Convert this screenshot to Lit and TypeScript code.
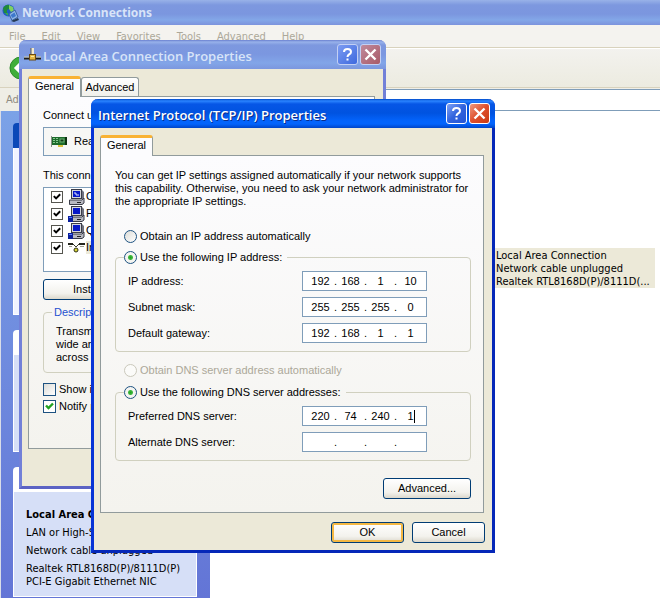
import { LitElement, html, svg, css, nothing } from "lit";
import { customElement, property } from "lit/decorators.js";

const tahoma = css`"DejaVu Sans Condensed", "Noto Sans", sans-serif`;
const dialogFont = css`"Liberation Sans", Arial, sans-serif`;
const titleFont = css`"Open Sans", "Noto Sans", sans-serif`;

const globeIcon = html`<svg width="17" height="18" viewBox="0 0 17 18" aria-hidden="true">
  <circle cx="6.5" cy="6.5" r="6" fill="#1f5cc4" />
  <path d="M1 4 Q4 0 7 1 L8 4 L5 6 L5 9 L2 9Z" fill="#1f8a3c" />
  <path d="M7 1 L11 3 L12 7 L9 8 L7 5Z" fill="#7fd060" />
  <path d="M3 9 L6 9 L6 12Z" fill="#38a850" />
  <path d="M7 10 L13 6 L16 13 L10 16.5Z" fill="#8fb4e4" stroke="#3a64a4" />
  <path d="M8.5 11 L12.5 8.5 L14 12 L10.5 14Z" fill="#3d78cc" />
  <path d="M9 17 L16 14 L17 16 L12 18Z" fill="#243a55" />
</svg>`;

const plugIcon = html`<svg width="17" height="14" viewBox="0 0 17 14" aria-hidden="true">
  <path d="M7 0 H10 V6 H7Z" fill="#f3ead0" />
  <path d="M7 0 V6" stroke="#5b5b52" />
  <path d="M0 10.5 H5 M12 10.5 H17" stroke="#1e1e1a" stroke-width="2" />
  <path d="M0 9 H5 M12 9 H17" stroke="#cfc9a8" />
  <rect x="5.5" y="6.5" width="6" height="5.5" fill="#e5b843" stroke="#6b4a14" />
  <path d="M7 8.5 H10" stroke="#fbe9a0" />
</svg>`;

const cardIcon = html`<svg width="18" height="14" viewBox="0 0 18 14" aria-hidden="true">
  <path d="M1.5 1 V12" stroke="#8a8f86" />
  <rect x="2" y="2" width="14" height="8" fill="#1d6b2b" />
  <path d="M3 3.5 H8 M3 5.5 H8 M3 7.5 H8" stroke="#86c88c" />
  <path d="M5.5 3 V8" stroke="#1d6b2b" />
  <rect x="10" y="4" width="4" height="3" fill="#103c18" stroke="#6fb576" />
  <path d="M16 2 V10" stroke="#0b3311" stroke-width="2" />
  <rect x="8" y="10" width="5" height="2" fill="#d9c13b" />
</svg>`;

const computer = (shared: boolean) => html`<svg width="17" height="16" viewBox="0 0 17 16" aria-hidden="true">
  <path d="M4 1 H14 L16 3 V10 H4Z" fill="#6f7280" />
  <rect x="3.5" y="0.5" width="10" height="9" fill="#d5d6dc" stroke="#3a3c48" />
  <rect x="5" y="2" width="7" height="6" fill="#0718c8" />
  ${shared ? nothing : svg`<path d="M6 4 H8 V6 H11" stroke="#dfe5ff" fill="none" />`}
  <path d="M1.5 11 H14 L16 9 V14 L14 15.5 H1.5Z" fill="#b9bac2" stroke="#3a3c48" />
  <path d="M9 13.5 H13" stroke="#222" />
  ${shared ? svg`<path d="M0 10 H5 V16 H0Z" fill="#0a1f9c" /><path d="M1 11.5 H4" stroke="#5a7bff" />` : nothing}
</svg>`;

const cableIcon = html`<svg width="17" height="12" viewBox="0 0 17 12" aria-hidden="true">
  <path d="M0 2 H5 M11 2 H17" stroke="#24251d" stroke-width="2" />
  <path d="M1 4.5 H4 M12 4.5 H16" stroke="#9b9c8c" />
  <path d="M5 2 L8 5 L11 2" stroke="#3a3b2c" fill="none" />
  <circle cx="8" cy="8" r="2" fill="#d6d437" stroke="#2d2e14" />
</svg>`;

@customElement("xp-window")
class XpWindow extends LitElement {
  @property() heading = "";
  @property({ type: Boolean, reflect: true }) inactive = false;

  static styles = css`
    :host {
      display: block;
      box-sizing: border-box;
      border: 3px solid #0734d6;
      border-top: 0;
      border-right-color: #0527b8;
      border-bottom-color: #0527b8;
      border-radius: 7px 7px 0 0;
      background: #ece9d8;
    }
    :host([inactive]) {
      border-color: #7280d8;
      border-bottom-color: #5c63c4;
    }
    .bar {
      display: flex;
      align-items: center;
      gap: 2px;
      height: 29px;
      margin: 0 -3px;
      padding: 0 5px 0 7px;
      box-sizing: border-box;
      border-radius: 7px 7px 0 0;
      background: linear-gradient(#0049c8 0, #2a84ff 2px, #0656e6 5px, #0053e0 14px, #0364fc 22px, #0364fc 25px, #0045c8 29px);
    }
    :host([inactive]) .bar {
      background: linear-gradient(#6a80d0 0, #98b2ea 2px, #7d98df 5px, #7b97e0 14px, #82a5e8 23px, #7c97df 29px);
      padding-left: 5px;
    }
    h2 {
      flex: 1;
      margin: 0;
      padding-top: 2px;
      font: 600 13px/20px ${titleFont};
      color: #fff;
      text-shadow: 1px 1px 0 #0a2d8c;
      white-space: nowrap;
    }
    :host([inactive]) h2 {
      color: #d8e4f8;
      text-shadow: none;
    }
    button {
      width: 21px;
      height: 21px;
      padding: 0;
      border: 1px solid #fff;
      border-radius: 3px;
      background: linear-gradient(135deg, #7fa3f5, #3263dd 50%, #2456d6);
    }
    button.close {
      background: linear-gradient(135deg, #f09a80, #de4f2c 50%, #c83a14);
    }
    :host([inactive]) button {
      border-color: #c3d0f4;
      background: linear-gradient(135deg, #7c9cf2, #3e69de);
    }
    :host([inactive]) button.close {
      background: linear-gradient(135deg, #c08a9c, #a85a68);
    }
    svg {
      display: block;
    }
    .body {
      padding: 7px 7px 7px 6px;
    }
  `;

  render() {
    return html`
      <div class="bar">
        <slot name="icon"></slot>
        <h2>${this.heading}</h2>
        <button aria-label="Help">
          <svg width="19" height="19" viewBox="0 0 19 19">
            <path d="M6 7 Q6 4 9.5 4 Q13 4 13 7 Q13 8.5 11 9.5 Q9.5 10.3 9.5 12" stroke="#fff" stroke-width="2" fill="none" />
            <rect x="8.5" y="13.5" width="2" height="2" fill="#fff" />
          </svg>
        </button>
        <button class="close" aria-label="Close">
          <svg width="19" height="19" viewBox="0 0 19 19">
            <path d="M4.5 4.5 L14.5 14.5 M14.5 4.5 L4.5 14.5" stroke="#fff" stroke-width="2.4" />
          </svg>
        </button>
      </div>
      <div class="body"><slot></slot></div>
    `;
  }
}

@customElement("ip-field")
class IpField extends LitElement {
  @property() label = "";
  @property({ type: Array }) octets: string[] = ["", "", "", ""];
  @property({ type: Boolean }) editing = false;

  static styles = css`
    :host {
      display: flex;
      align-items: center;
      justify-content: space-between;
    }
    .box {
      display: flex;
      align-items: center;
      box-sizing: border-box;
      width: 125px;
      height: 20px;
      padding-left: 4px;
      border: 1px solid #7f9db9;
      background: #fff;
    }
    .octet {
      position: relative;
      width: 27px;
      flex: none;
    }
    .dot {
      width: 3px;
      flex: none;
      text-align: center;
    }
    input {
      display: block;
      width: 100%;
      height: 16px;
      box-sizing: border-box;
      padding: 0;
      border: 0;
      outline: 0;
      background: none;
      color: #000;
      font: inherit;
      text-align: center;
    }
    .caret {
      position: absolute;
      left: 17px;
      top: 2px;
      width: 1px;
      height: 13px;
      background: #000;
    }
  `;

  render() {
    return html`
      <label for="o0">${this.label}</label>
      <div class="box">
        ${this.octets.map(
          (value, i) => html`${i ? html`<span class="dot">.</span>` : nothing}
            <span class="octet">
              <input id="o${i}" aria-label="${this.label} part ${i + 1}" .value=${value} />
              ${this.editing && i === 3 ? html`<span class="caret"></span>` : nothing}
            </span>`
        )}
      </div>
    `;
  }
}

@customElement("app-root")
class AppRoot extends LitElement {
  static styles = css`
    :host {
      display: flex;
      flex-direction: column;
      position: relative;
      box-sizing: border-box;
      height: 100vh;
      overflow: hidden;
      background: #fff;
      color: #000;
      font: 11px/13px ${tahoma};
    }
    p,
    h1,
    h3 {
      margin: 0;
    }
    svg {
      display: block;
      flex: none;
    }
    .titlebar {
      display: flex;
      align-items: center;
      gap: 3px;
      height: 25px;
      flex: none;
      padding-left: 2px;
      background: linear-gradient(#98b2e8 0, #7d98df 5px, #7b96df 14px, #83a7e8 20px, #7c93dd 25px);
    }
    h1 {
      font: 700 12px/20px "Noto Sans", sans-serif;
      color: #d8e4f8;
    }
    .menu {
      display: flex;
      gap: 16px;
      height: 23px;
      flex: none;
      padding: 4px 9px 0;
      box-sizing: border-box;
      background: #f4f3ef;
      border-bottom: 1px solid #d8d2bd;
      color: #aca899;
      line-height: 15px;
    }
    .toolbar {
      display: flex;
      align-items: center;
      height: 40px;
      flex: none;
      padding-left: 9px;
      box-sizing: border-box;
      background: linear-gradient(#f3f2ee, #ecebe0);
      border-top: 1px solid #fff;
      border-bottom: 1px solid #d8d2bd;
    }
    .back {
      width: 24px;
      height: 24px;
      padding: 0;
      border: 0;
      background: none;
    }
    .address {
      display: flex;
      align-items: center;
      height: 23px;
      flex: none;
      padding-left: 6px;
      background: #efeee6;
      color: #8f8c80;
    }
    .address input {
      flex: 1;
      min-width: 0;
      height: 22px;
      margin-left: 8px;
      box-sizing: border-box;
      border: 1px solid #7f9db9;
      border-right: 0;
      background: #fff;
    }
    .main {
      display: flex;
      flex: 1;
      min-height: 0;
    }
    .side {
      display: flex;
      flex-direction: column;
      gap: 15px;
      width: 210px;
      flex: none;
      box-sizing: border-box;
      padding: 12px 13px 0 12px;
      border-left: 1px solid #d9dde8;
      background: linear-gradient(#7ba2e7, #6375d6);
    }
    .side h3 {
      height: 25px;
      border-radius: 4px 4px 0 0;
      background: #fff;
    }
    .side .primary {
      background: #0a48b8;
    }
    .card div {
      box-sizing: border-box;
      border: 1px solid #fff;
      border-top: 0;
      background: #d6dff7;
    }
    .tasks div {
      height: 167px;
      background: #f0f3ff;
    }
    .places div {
      height: 97px;
    }
    .card .details {
      display: flex;
      flex-direction: column;
      gap: 5px;
      height: 105px;
      padding: 16px 12px 0;
      white-space: nowrap;
    }
    .selected {
      position: absolute;
      left: 495px;
      top: 248px;
      width: 160px;
      padding: 1px 0 0 1px;
      box-sizing: border-box;
      background: #ece9d8;
      white-space: nowrap;
    }
    .lan {
      position: absolute;
      left: 19px;
      top: 40px;
      width: 367px;
      font: 11px/13px ${dialogFont};
    }
    .tcp {
      position: absolute;
      left: 91px;
      top: 99px;
      width: 404px;
      font: 11px/13px ${dialogFont};
    }
    .tabs {
      display: flex;
      align-items: flex-end;
      margin-bottom: -1px;
      position: relative;
    }
    .tab {
      width: 58px;
      height: 19px;
      padding: 0;
      border: 1px solid #919b9c;
      border-bottom: 0;
      border-radius: 3px 3px 0 0;
      box-sizing: border-box;
      background: linear-gradient(#fff, #f1f0ea);
      color: #000;
      font: inherit;
      margin-bottom: 1px;
    }
    .tab.on {
      width: 53px;
      height: 21px;
      padding: 0 0 3px;
      border-top: 3px solid #f9b233;
      background: #fcfcfe;
      margin-bottom: 0;
    }
    .pane {
      display: flex;
      flex-direction: column;
      box-sizing: border-box;
      margin-right: 1px;
      border: 1px solid #919b9c;
      background: linear-gradient(#fcfcfe, #f4f3ee);
      white-space: nowrap;
    }
    .tcp .pane {
      padding: 13px 12px 13px 14px;
    }
    .lan .pane {
      padding: 12px 14px 33px;
      margin-bottom: 30px;
    }
    .choice {
      display: flex;
      align-items: center;
      gap: 3px;
      height: 16px;
    }
    .choice.off {
      color: #aca899;
    }
    input[type="radio"],
    input[type="checkbox"] {
      appearance: none;
      flex: none;
      width: 13px;
      height: 13px;
      margin: 0;
      box-sizing: border-box;
      border: 1px solid #1d5281;
      background: linear-gradient(135deg, #dcdcd7, #fff);
    }
    input[type="radio"] {
      border-radius: 50%;
    }
    input[type="radio"]:checked {
      background: radial-gradient(circle, #21a121 0, #3fb83f 2px, #f4f4f1 3px);
    }
    input[type="radio"]:disabled {
      border-color: #cac8bb;
      background: #fbfbf9;
    }
    input[type="checkbox"]:checked {
      background: url('data:image/svg+xml,<svg xmlns="http://www.w3.org/2000/svg" viewBox="0 0 11 11"><path d="M2 4.5 L4.5 7 L9 2.5" stroke="rgb(33,161,33)" stroke-width="2.4" fill="none"/></svg>') #fff;
    }
    .list input[type="checkbox"] {
      width: 12px;
      height: 12px;
      border-color: #55554f;
      background: url('data:image/svg+xml,<svg xmlns="http://www.w3.org/2000/svg" viewBox="0 0 11 11"><path d="M2 4.5 L4.5 7 L9 2.5" stroke="black" stroke-width="2.2" fill="none"/></svg>') #fff;
    }
    fieldset {
      display: flex;
      flex-direction: column;
      gap: 6px;
      min-width: 0;
      margin: 0;
      padding: 6px 43px 8px 12px;
      border: 1px solid #d0d0bf;
      border-radius: 4px;
    }
    legend {
      margin-left: -4px;
      padding: 0 5px 0 0;
    }
    .auto {
      margin: 20px 0 5px 9px;
    }
    .auto-dns {
      margin: 10px 0 6px 9px;
    }
    .push {
      height: 21px;
      box-sizing: border-box;
      padding: 0;
      border: 1px solid #003c74;
      border-radius: 3px;
      background: linear-gradient(#fff, #f3f2ed 70%, #dcd8cc);
      color: #000;
      font: inherit;
    }
    .push.default {
      box-shadow: inset 0 0 0 2px #f4b843;
    }
    .more {
      align-self: flex-end;
      width: 88px;
      margin-top: 17px;
    }
    .actions {
      display: flex;
      justify-content: flex-end;
      gap: 8px;
      margin-top: 9px;
    }
    .actions .push {
      width: 73px;
    }
    .adapter {
      display: flex;
      align-items: center;
      gap: 6px;
      height: 29px;
      margin: 5px 0 13px;
      padding-left: 6px;
      box-sizing: border-box;
      border: 1px solid #7f9db9;
      background: #f7f7f5;
    }
    .list {
      height: 85px;
      margin: 5px 0 7px;
      padding: 0 0 0 7px;
      box-sizing: border-box;
      border: 1px solid #7f9db9;
      background: #fff;
    }
    .list label {
      display: flex;
      align-items: center;
      gap: 5px;
      height: 17px;
    }
    .list svg {
      margin-right: -4px;
    }
    .list .hot {
      background: #ece9d8;
    }
    .install {
      width: 98px;
    }
    .about {
      margin: 6px 0 8px;
      display: block;
    }
    .about legend {
      margin-left: -4px;
      padding: 0 2px;
      color: #2350d0;
    }
    .opt {
      height: 17px;
    }
  `;

  render() {
    return html`
      <header class="titlebar">${globeIcon}<h1>Network Connections</h1></header>
      <nav class="menu">
        <span>File</span><span>Edit</span><span>View</span><span>Favorites</span><span>Tools</span><span>Advanced</span><span>Help</span>
      </nav>
      <div class="toolbar">
        <button class="back" aria-label="Back">
          <svg width="24" height="24" viewBox="0 0 24 24">
            <circle cx="12" cy="12" r="11" fill="#3fae3a" stroke="#2c8a2a" />
            <path d="M13 6 L7 12 L13 18 M7 12 H18" stroke="#fff" stroke-width="3" fill="none" />
          </svg>
        </button>
      </div>
      <div class="address">
        <label for="addr">Ad</label>
        <input id="addr" type="text" />
      </div>
      <div class="main">
        <aside class="side">
          <section class="card tasks"><h3 class="primary"></h3><div></div></section>
          <section class="card places"><h3></h3><div></div></section>
          <section class="card">
            <h3></h3>
            <div class="details">
              <b>Local Area C</b>
              <p>LAN or High-S</p>
              <p>Network cable unplugged</p>
              <p>Realtek RTL8168D(P)/8111D(P)<br />PCI-E Gigabit Ethernet NIC</p>
            </div>
          </section>
        </aside>
      </div>
      <div class="selected">
        <p>Local Area Connection</p>
        <p>Network cable unplugged</p>
        <p>Realtek RTL8168D(P)/8111D(...</p>
      </div>

      <xp-window class="lan" inactive heading="Local Area Connection Properties">
        <span slot="icon">${plugIcon}</span>
        <div class="tabs">
          <button class="tab on">General</button>
          <button class="tab">Advanced</button>
        </div>
        <div class="pane">
          <p>Connect u</p>
          <div class="adapter">${cardIcon}<span>Rea</span></div>
          <p>This conne</p>
          <div class="list">
            <label><input type="checkbox" checked />${computer(false)}<span>C</span></label>
            <label><input type="checkbox" checked />${computer(true)}<span>F</span></label>
            <label><input type="checkbox" checked />${computer(true)}<span>Q</span></label>
            <label><input type="checkbox" checked />${cableIcon}<span class="hot">In</span></label>
          </div>
          <button class="push install">Install...</button>
          <fieldset class="about">
            <legend>Descript</legend>
            Transm<br />
            wide are<br />
            across c
          </fieldset>
          <label class="choice opt"><input type="checkbox" />Show i</label>
          <label class="choice opt"><input type="checkbox" checked />Notify r</label>
        </div>
      </xp-window>

      <xp-window class="tcp" heading="Internet Protocol (TCP/IP) Properties">
        <div class="tabs"><button class="tab on">General</button></div>
        <div class="pane">
          <p>
            You can get IP settings assigned automatically if your network supports<br />
            this capability. Otherwise, you need to ask your network administrator for<br />
            the appropriate IP settings.
          </p>
          <label class="choice auto"><input type="radio" name="ip" />Obtain an IP address automatically</label>
          <fieldset>
            <legend>
              <label class="choice"><input type="radio" name="ip" checked />Use the following IP address:</label>
            </legend>
            <ip-field label="IP address:" .octets=${["192", "168", "1", "10"]}></ip-field>
            <ip-field label="Subnet mask:" .octets=${["255", "255", "255", "0"]}></ip-field>
            <ip-field label="Default gateway:" .octets=${["192", "168", "1", "1"]}></ip-field>
          </fieldset>
          <label class="choice off auto-dns"><input type="radio" name="dns" disabled />Obtain DNS server address automatically</label>
          <fieldset>
            <legend>
              <label class="choice"><input type="radio" name="dns" checked />Use the following DNS server addresses:</label>
            </legend>
            <ip-field label="Preferred DNS server:" editing .octets=${["220", "74", "240", "1"]}></ip-field>
            <ip-field label="Alternate DNS server:"></ip-field>
          </fieldset>
          <button class="push more">Advanced...</button>
        </div>
        <div class="actions">
          <button class="push default">OK</button>
          <button class="push">Cancel</button>
        </div>
      </xp-window>
    `;
  }
}
